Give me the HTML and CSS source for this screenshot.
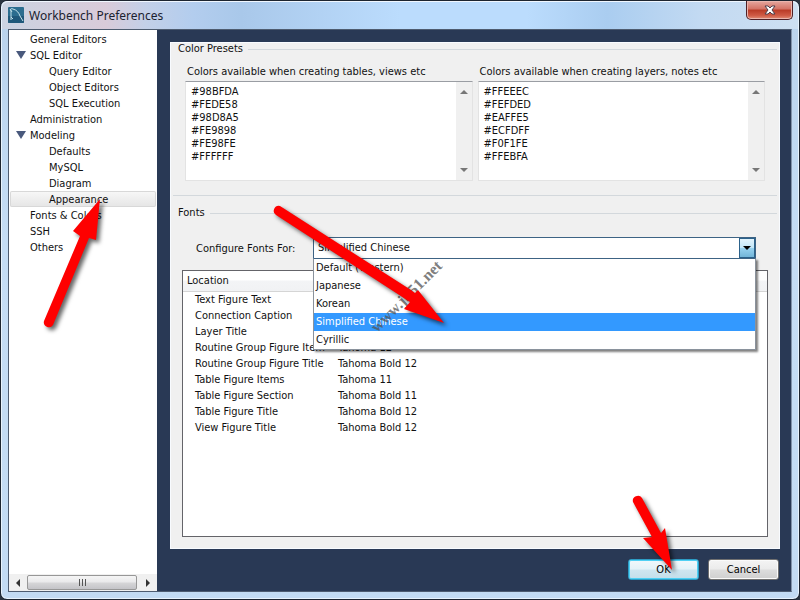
FILE: index.html
```
<!DOCTYPE html>
<html lang="en">
<head>
    <meta charset="UTF-8" />
    <title>Workbench Preferences</title>
    <meta name="viewport" content="width=device-width, initial-scale=1" />
    <link rel="stylesheet" href="styles.css">
</head>
<body>
    <div class="window">
        <header class="titlebar">
            <svg class="app-icon" viewBox="0 0 16 16">
                <rect width="16" height="16" rx="1" fill="#2b6d8f"/>
                <path d="M0 9h16v6a1 1 0 0 1-1 1H1a1 1 0 0 1-1-1z" fill="#1f587a"/>
                <path d="M3 13V4c-1-2 0-3 2-2 4 1 6 4 7 7l3 5M2 2l2 3M3 10l2 2" fill="none" stroke="#c3e2ea" stroke-width="1"/>
            </svg>
            <h1>Workbench Preferences</h1>
            <button class="close-btn" aria-label="Close">
                <svg viewBox="0 0 12 10">
                    <path d="M1 1h3l2 2 2-2h3L8 5l3 4H8L6 7 4 9H1l3-4z" fill="#fff" stroke="#4c3f4c" stroke-width="1"/>
                </svg>
            </button>
        </header>

        <div class="client">
            <nav class="sidebar">
                <ul class="tree">
                    <li>General Editors</li>
                    <li class="open">SQL Editor</li>
                    <li class="child">Query Editor</li>
                    <li class="child">Object Editors</li>
                    <li class="child">SQL Execution</li>
                    <li>Administration</li>
                    <li class="open">Modeling</li>
                    <li class="child">Defaults</li>
                    <li class="child">MySQL</li>
                    <li class="child">Diagram</li>
                    <li class="child selected">Appearance</li>
                    <li>Fonts &amp; Colors</li>
                    <li>SSH</li>
                    <li>Others</li>
                </ul>
                <div class="hscroll">
                    <svg viewBox="0 0 16 16"><path d="M10 4v8L6 8z" fill="#333"/></svg>
                    <div class="thumb"><i></i><i></i><i></i></div>
                    <svg viewBox="0 0 16 16"><path d="M6 4v8l4-4z" fill="#333"/></svg>
                </div>
            </nav>

            <main class="main">
                <div class="panel">
                    <fieldset class="presets">
                        <legend>Color Presets</legend>
                        <div class="preset-grid">
                            <div class="preset">
                                <label for="tables">Colors available when creating tables, views etc</label>
                                <div class="memo">
                                    <textarea id="tables" spellcheck="false">#98BFDA
#FEDE58
#98D8A5
#FE9898
#FE98FE
#FFFFFF</textarea>
                                    <div class="vscroll">
                                        <svg viewBox="0 0 8 4"><path d="M0 4l4-4 4 4z" fill="#777"/></svg>
                                        <svg viewBox="0 0 8 4"><path d="M0 0l4 4 4-4z" fill="#777"/></svg>
                                    </div>
                                </div>
                            </div>
                            <div class="preset">
                                <label for="layers">Colors available when creating layers, notes etc</label>
                                <div class="memo">
                                    <textarea id="layers" spellcheck="false">#FFEEEC
#FEFDED
#EAFFE5
#ECFDFF
#F0F1FE
#FFEBFA</textarea>
                                    <div class="vscroll">
                                        <svg viewBox="0 0 8 4"><path d="M0 4l4-4 4 4z" fill="#777"/></svg>
                                        <svg viewBox="0 0 8 4"><path d="M0 0l4 4 4-4z" fill="#777"/></svg>
                                    </div>
                                </div>
                            </div>
                        </div>
                    </fieldset>

                    <fieldset class="fonts">
                        <legend>Fonts</legend>
                        <div class="fonts-body">
                            <div class="font-row">
                                <label for="charset">Configure Fonts For:</label>
                                <div class="combo">
                                    <select id="charset">
                                        <option>Default (Western)</option>
                                        <option>Japanese</option>
                                        <option>Korean</option>
                                        <option selected>Simplified Chinese</option>
                                        <option>Cyrillic</option>
                                    </select>
                                    <span class="combo-arrow"></span>
                                    <ul class="dropdown">
                                        <li>Default (Western)</li>
                                        <li>Japanese</li>
                                        <li>Korean</li>
                                        <li class="active">Simplified Chinese</li>
                                        <li>Cyrillic</li>
                                    </ul>
                                </div>
                            </div>
                            <div class="list">
                                <table>
                                    <thead>
                                        <tr><th>Location</th><th></th></tr>
                                    </thead>
                                    <tbody>
                                        <tr><td>Text Figure Text</td><td></td></tr>
                                        <tr><td>Connection Caption</td><td></td></tr>
                                        <tr><td>Layer Title</td><td></td></tr>
                                        <tr><td>Routine Group Figure Item</td><td>Tahoma 12</td></tr>
                                        <tr><td>Routine Group Figure Title</td><td>Tahoma Bold 12</td></tr>
                                        <tr><td>Table Figure Items</td><td>Tahoma 11</td></tr>
                                        <tr><td>Table Figure Section</td><td>Tahoma Bold 11</td></tr>
                                        <tr><td>Table Figure Title</td><td>Tahoma Bold 12</td></tr>
                                        <tr><td>View Figure Title</td><td>Tahoma Bold 12</td></tr>
                                    </tbody>
                                </table>
                            </div>
                        </div>
                    </fieldset>
                </div>
                <footer class="actions">
                    <button class="btn default">OK</button>
                    <button class="btn">Cancel</button>
                </footer>
            </main>
        </div>
    </div>

    <!-- Watermark and pointer arrows over the window -->
    <svg class="overlay" width="800" height="600" viewBox="0 0 800 600">
        <text class="watermark" transform="translate(377 333) rotate(-45)">www.jb51.net</text>
        <g class="arrows">
            <path d="M44 321L80 236L73 231L100 199L96 240L89 238L53 325A5 5 0 0 1 44 321z"/>
            <path d="M280 206L411 290L415 293L418 290L444 323L404 309L410 302L276 215A5 5 0 0 1 280 206z"/>
            <path d="M642 498L661 533L665 528L672 570L643 538L652 537L633 502A5 5 0 0 1 642 498z"/>
        </g>
    </svg>
</body>
</html>
```

FILE: styles.css
```
* {
    box-sizing: border-box;
}
html, body {
    height: 100%;
    margin: 0;
    overflow: hidden;
}
body {
    font-family: "DejaVu Sans Condensed", "DejaVu Sans", sans-serif;
    font-size: 11px;
    color: #111;
    background: #2a3440;
}
ul {
    list-style: none;
    margin: 0;
    padding: 0;
}
/* Glass frame */
.window {
    height: 100vh;
    display: flex;
    flex-direction: column;
    padding: 0 7px 7px;
    border: 1px solid #1d2530;
    border-radius: 7px;
    background: linear-gradient(#b9d2ec 0, #c5ddf5 40%, #c3dbf3 100%);
    box-shadow: inset 0 0 0 1px #e8f3fd;
}
.titlebar {
    flex: none;
    height: 28px;
    display: flex;
    align-items: center;
    gap: 5px;
    margin: 0 -6px;
    padding: 0 5px 0 6px;
    border-radius: 6px 6px 0 0;
    background: linear-gradient(90deg, #cbd3e2 0, #d9cbd9 13%, #c3d0e8 18%, #b3cdee 24%, #a9c8ea 30%, #bbdcfd 50%, #bbdcfd 66%, #aacdf0 76%, #c3daf2 88%, #cddff1 100%);
    box-shadow: inset 0 1px #f0f7ff;
}
.app-icon {
    width: 16px;
    height: 16px;
}
.titlebar h1 {
    flex: 1;
    margin: 0;
    font-family: "Noto Sans", sans-serif;
    font-size: 12px;
    font-weight: normal;
    color: #1b2230;
}
.close-btn {
    align-self: flex-start;
    display: flex;
    justify-content: center;
    align-items: center;
    width: 47px;
    height: 19px;
    padding: 0;
    border: 1px solid #4f2026;
    border-top: 0;
    border-radius: 0 0 5px 5px;
    background: linear-gradient(#e6a79f 0, #d37264 45%, #b93a26 50%, #cf5a45 80%, #e18d76 100%);
    box-shadow: inset 0 0 0 1px #eab5ad;
}
.close-btn svg {
    width: 12px;
    height: 10px;
}
.client {
    flex: 1;
    min-height: 0;
    display: flex;
    border: 1px solid #4e5c70;
    border-right-color: #8293aa;
    background: #293955;
}
/* Category tree */
.sidebar {
    flex: none;
    width: 148px;
    display: flex;
    flex-direction: column;
    background: #fff;
}
.tree {
    flex: 1;
    padding: 1px;
}
.tree li {
    position: relative;
    height: 16px;
    line-height: 18px;
    padding-left: 20px;
    white-space: nowrap;
}
.tree .child {
    padding-left: 39px;
}
.tree .open::before {
    content: "";
    position: absolute;
    top: 4px;
    left: 6px;
    border: 5px solid transparent;
    border-top: 8px solid #49597c;
    border-bottom: 0;
}
.tree .selected {
    border-radius: 2px;
    background: linear-gradient(#f8f8f8, #e5e5e5);
    box-shadow: inset 0 0 0 1px #d8d8d8;
}
.hscroll {
    display: flex;
    align-items: center;
    height: 17px;
    background: #f0f0f0;
}
.hscroll svg {
    width: 18px;
    height: 16px;
}
.thumb {
    flex: 1;
    height: 15px;
    margin-right: 2px;
    display: flex;
    justify-content: center;
    align-items: center;
    gap: 2px;
    border: 1px solid #979797;
    border-radius: 2px;
    background: linear-gradient(#f5f5f5 0, #e9e9eb 48%, #d6d6d8 52%, #c4c4c8 100%);
}
.thumb i {
    width: 1px;
    height: 7px;
    background: #555;
}
/* Settings page */
.main {
    flex: 1;
    min-width: 0;
    display: flex;
    flex-direction: column;
    gap: 10px;
    padding: 12px 11px 11px 13px;
}
.panel {
    flex: 1;
    min-height: 0;
    display: flex;
    flex-direction: column;
    gap: 10px;
    padding: 0 3px 12px;
    background: #f0f0f0;
    box-shadow: inset 0 0 0 1px #f8fbff;
}
fieldset {
    margin: 0;
    min-width: 0;
    padding: 0;
    border: 0 solid #d3d8dc;
    border-top-width: 1px;
}
legend {
    height: 14px;
    line-height: 14px;
    padding: 0 5px;
}
.presets {
    border-bottom-width: 1px;
}
.preset-grid {
    display: grid;
    grid-template-columns: 1fr 1fr;
    gap: 5px;
    padding: 6px 12px 14px;
}
.preset label {
    display: block;
    height: 19px;
    line-height: 19px;
    padding-left: 2px;
    white-space: nowrap;
}
.memo {
    display: flex;
    height: 100px;
    border: 1px solid #e3e3e3;
    border-top-color: #9a9da3;
    background: #fff;
}
.memo textarea {
    flex: 1;
    min-width: 0;
    padding: 3px 5px;
    border: 0;
    outline: 0;
    resize: none;
    overflow: hidden;
    font: inherit;
    line-height: 13px;
    color: inherit;
    background: transparent;
}
.vscroll {
    width: 16px;
    display: flex;
    flex-direction: column;
    justify-content: space-between;
    align-items: center;
    padding: 8px 0;
    background: #f0f0f0;
}
.vscroll svg {
    width: 8px;
    height: 4px;
}
.fonts {
    flex: 1;
    display: flex;
    flex-direction: column;
}
.fonts-body {
    height: 100%;
    display: flex;
    flex-direction: column;
    gap: 11px;
    padding: 17px 9px 0;
}
.font-row {
    display: flex;
    align-items: center;
    padding: 0 12px 0 14px;
}
.font-row label {
    width: 117px;
    white-space: nowrap;
}
.combo {
    flex: 1;
    position: relative;
    display: flex;
    height: 22px;
    border: 1px solid #3d6384;
    background: #fff;
}
.combo select {
    flex: 1;
    appearance: none;
    padding: 0 4px 2px;
    border: 0;
    outline: 0;
    font: inherit;
    color: inherit;
    background: transparent;
}
.combo-arrow {
    width: 16px;
    display: flex;
    justify-content: center;
    align-items: center;
    border: 1px solid #2c628b;
    background: linear-gradient(#e3f4fc 0, #c3e7f8 48%, #97d2f0 52%, #72b5d8 100%);
}
.combo-arrow::after {
    content: "";
    border: 4px solid transparent;
    border-top-color: #000;
    border-bottom: 0;
}
.dropdown {
    position: absolute;
    z-index: 5;
    top: 20px;
    left: -1px;
    right: -1px;
    border: 1px solid #8a929c;
    border-top-color: #3d6384;
    background: #fff;
    box-shadow: 2px 2px 2px rgba(0,0,0,0.5);
}
.dropdown li {
    height: 18px;
    line-height: 18px;
    padding-left: 2px;
}
.dropdown .active {
    color: #fff;
    background: #3399ff;
}
.list {
    flex: 1;
    border: 1px solid #646469;
    background: #fff;
}
.list table {
    width: 100%;
    border-collapse: collapse;
    table-layout: fixed;
}
.list th, .list td {
    height: 16px;
    padding: 0 0 0 12px;
    line-height: 16px;
    font-weight: normal;
    text-align: left;
    white-space: nowrap;
}
.list th {
    height: 20px;
    padding-left: 4px;
    border-bottom: 1px solid #d5d5d5;
    background: linear-gradient(#fff 0, #fff 45%, #f3f4f6 50%, #f1f2f4 100%);
}
.list th:first-child {
    width: 143px;
}
/* Dialog buttons */
.actions {
    display: flex;
    justify-content: flex-end;
    gap: 9px;
    padding-right: 1px;
}
.btn {
    width: 71px;
    height: 21px;
    padding: 0;
    border: 1px solid #707070;
    border-radius: 3px;
    font: inherit;
    color: #000;
    background: linear-gradient(#f4f4f4 0, #ebebeb 48%, #dddddd 52%, #cfcfcf 100%);
    box-shadow: inset 0 0 0 1px #fafafa;
}
.btn.default {
    border-color: #2d9cc4;
    background: linear-gradient(#f1f8fb 0, #e3f2f8 48%, #cfe6f0 52%, #c3deea 100%);
    box-shadow: inset 0 0 0 1px #4fd0f4;
}
.overlay {
    position: absolute;
    top: 0;
    left: 0;
    z-index: 10;
    pointer-events: none;
}
.watermark {
    font-family: "Liberation Serif", serif;
    font-size: 16px;
    font-weight: bold;
    fill: #555;
    fill-opacity: 0.75;
}
.arrows {
    fill: #fe0000;
    filter: drop-shadow(3px 3px 2px rgba(0,0,0,0.6));
}
```
